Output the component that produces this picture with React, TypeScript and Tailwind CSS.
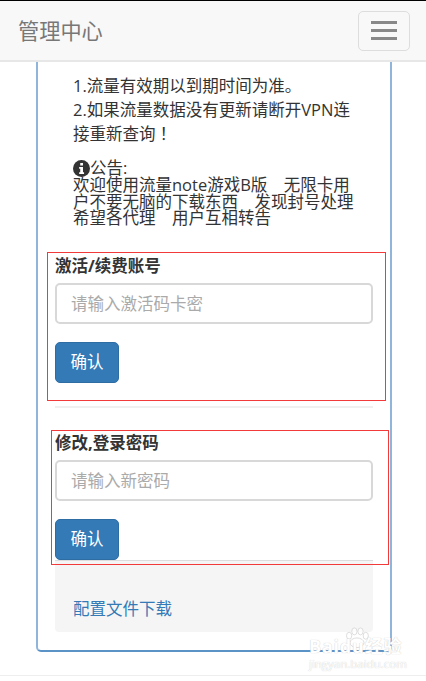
import React from 'react';

const fontStack = "font-['Open_Sans','Liberation_Sans','Noto_Sans_CJK_SC',sans-serif]";

const PasswordForm = ({ title, placeholder }: { title: string; placeholder: string }) => (
  <div>
    <div className="text-[16.5px] leading-[24px] font-bold text-[#333]">{title}</div>
    <input
      readOnly
      placeholder={placeholder}
      className="mt-[5px] block h-[41px] w-full rounded-[5px] border-2 border-[#d8d8d8] bg-white px-[14px] text-[16.5px] outline-none placeholder:text-[#aaa]"
    />
    <button className="mt-[18px] block h-[41px] w-[64px] rounded-[5px] border border-[#2e6da4] bg-[#337ab7] text-[16.5px] text-white">
      确认
    </button>
  </div>
);

export default function App() {
  return (
    <div className={`relative h-[681px] w-[426px] overflow-hidden bg-white text-[#333] ${fontStack}`}>
      {/* Top Bar */}
      <header className="flex h-[62px] items-center justify-between border-t border-b-2 border-t-black border-b-[#e7e7e7] bg-[#f8f8f8] pr-[16px] pl-[18px]">
        <h1 className="text-[21.2px] font-normal text-[#777]">管理中心</h1>
        <button className="flex h-[40px] w-[52px] flex-col items-center justify-center gap-[5px] rounded-[5px] border border-[#ddd]">
          <span className="h-[3px] w-[26px] bg-[#888]" />
          <span className="h-[3px] w-[26px] bg-[#888]" />
          <span className="h-[3px] w-[26px] bg-[#888]" />
        </button>
      </header>

      {/* Panel */}
      <main className="mr-[34px] ml-[36px] h-[590px] rounded-b-[5px] border-x-2 border-b-2 border-x-[#8fb5da] border-b-[#5b93c7] px-[17px] pt-[12px]">
        <div className="px-[18px] text-[16.5px]">
          <p className="leading-[24px]">1.流量有效期以到期时间为准。</p>
          <p className="leading-[24px]">
            2.如果流量数据没有更新请断开VPN连接重新查询<span className="font-['Noto_Sans_CJK_TC',sans-serif] leading-none">！</span>
          </p>
          <div className="mt-[14px] leading-[16.5px]">
            <div className="flex items-center">
              <svg viewBox="0 0 16 16" className="h-[17px] w-[17px] shrink-0">
                <circle cx="8" cy="8" r="8" fill="#333" />
                <rect x="6.8" y="2.8" width="2.6" height="2.4" fill="#fff" />
                <path d="M5.8 6.6h3.6v5h1v1.6H5.8v-1.6h1V8.2h-1z" fill="#fff" />
              </svg>
              <span>公告:</span>
            </div>
            <p>欢迎使用流量note游戏B版　无限卡用户不要无脑的下载东西　发现封号处理希望各代理　用户互相转告</p>
          </div>
        </div>

        <div className="mt-[27px]">
          <PasswordForm title="激活/续费账号" placeholder="请输入激活码卡密" />
        </div>
        <hr className="mt-[23px] border-t-2 border-[#f0f0f0]" />
        <div className="mt-[23px]">
          <PasswordForm title="修改,登录密码" placeholder="请输入新密码" />
        </div>

        <div className="h-[72px] rounded-b-[4px] border-t border-[#ddd] bg-[#f5f5f5] px-[18px] pt-[36px]">
          <a className="block text-[16.5px] leading-[24px] text-[#337ab7]">配置文件下载</a>
        </div>
      </main>

      <div className="absolute top-[675px] left-0 h-[1px] w-full bg-[#eeeeee]" />

      {/* Red annotation boxes */}
      <div className="absolute top-[252px] left-[47px] h-[149px] w-[339px] border border-[#f23a3a]" />
      <div className="absolute top-[430px] left-[51px] h-[135px] w-[338px] border border-[#f23a3a]" />

      {/* Watermark */}
      <div className="pointer-events-none absolute top-[626px] left-[309px] h-[50px] w-[90px] text-white [text-shadow:0_0_1px_#bbb]">
        <svg viewBox="0 0 32 24" className="absolute top-[1px] left-[34px] h-[21px] w-[28px]" fill="#fff" fillOpacity="0.7" stroke="#d8d8d8" strokeWidth="1">
          <ellipse cx="7" cy="10" rx="3" ry="4" />
          <ellipse cx="13" cy="5" rx="3" ry="4" />
          <ellipse cx="20" cy="5" rx="3" ry="4" />
          <ellipse cx="26" cy="10" rx="3" ry="4" />
          <ellipse cx="16" cy="18" rx="8" ry="5.5" />
        </svg>
        <div className="absolute top-[10px] left-0 text-[18px] leading-[20px] font-bold tracking-[0.8px] whitespace-nowrap">Baidu经验</div>
        <div className="absolute top-[31px] left-0 text-[11.5px] leading-[14px] whitespace-nowrap">jingyan.baidu.com</div>
      </div>
    </div>
  );
}
